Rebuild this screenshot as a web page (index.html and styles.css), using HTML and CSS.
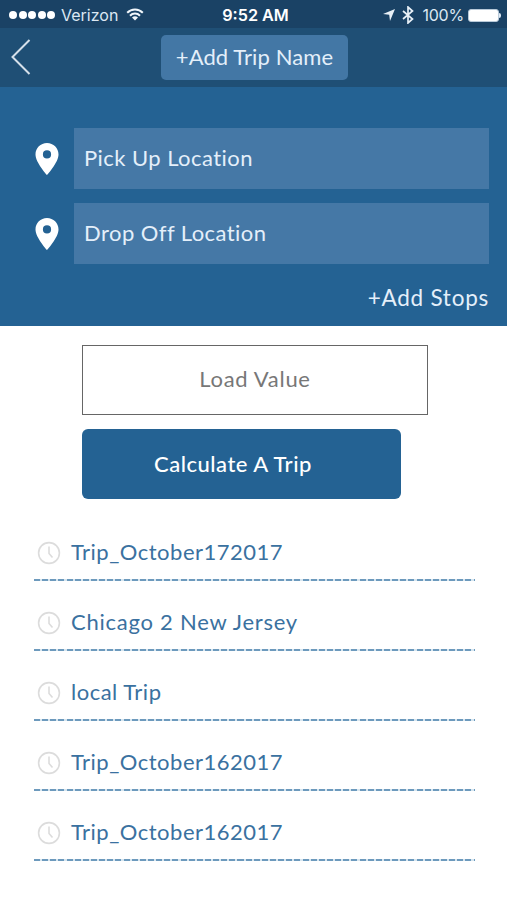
FILE: index.html
```html
<!DOCTYPE html>
<html lang="en">
<head>
    <meta charset="UTF-8">
    <meta name="viewport" content="width=device-width, initial-scale=1.0">
    <title>Trip Calculator</title>
    <link rel="stylesheet" href="styles.css">
</head>
<body>
    <!-- Shared icons -->
    <svg width="0" height="0" class="sprite">
        <symbol id="pin" viewBox="0 0 24 32">
            <path fill-rule="evenodd" d="M12 0C5.600 0 .5 5 .5 11.400C.5 19.500 12 32 12 32S23.500 19.500 23.500 11.400C23.500 5 18.400 0 12 0ZM12 7.300A4.100 4.100 0 1 1 12 15.500A4.100 4.100 0 1 1 12 7.300Z"/>
        </symbol>
        <symbol id="clock" viewBox="0 0 24 24">
            <circle cx="12" cy="12" r="10.400"/>
            <path d="M12 5.500V12.500L15.500 16.500"/>
        </symbol>
    </svg>

    <div class="status-bar">
        <div class="status-left">
            <span class="signal"><i></i><i></i><i></i><i></i><i></i></span>
            <span class="carrier">Verizon</span>
            <svg class="wifi" width="18" height="13" viewBox="0 0 18 13">
                <path d="M1.200 4.800A11 11 0 0 1 16.800 4.800M4 7.700A7 7 0 0 1 14 7.700"/>
                <path class="solid" d="M9 12.600L6 9.600A4.300 4.300 0 0 1 12 9.600Z"/>
            </svg>
        </div>
        <div class="time">9:52 AM</div>
        <div class="status-right">
            <svg class="arrow" width="12" height="12" viewBox="0 0 12 12"><path d="M12 0L7 12L6.200 5.800L0 5Z"/></svg>
            <svg class="bluetooth" width="12" height="18" viewBox="0 0 12 18"><path d="M1 5L10.500 13L6 17V1L10.500 5L1 13"/></svg>
            <span class="percent">100%</span>
            <span class="battery"></span>
        </div>
    </div>

    <div class="nav">
        <svg class="back" width="20" height="36" viewBox="0 0 20 36"><path d="M18.500 1L1.500 18L18.500 35"/></svg>
        <button class="trip-name">+Add Trip Name</button>
    </div>

    <div class="locations">
        <div class="location">
            <svg class="pin" width="24" height="32"><use href="#pin"/></svg>
            <div class="field">Pick Up Location</div>
        </div>
        <div class="location">
            <svg class="pin" width="24" height="32"><use href="#pin"/></svg>
            <div class="field">Drop Off Location</div>
        </div>
        <div class="add-stops">+Add Stops</div>
    </div>

    <div class="form">
        <div class="load-value">Load Value</div>
        <button class="calculate">Calculate A Trip</button>
    </div>

    <ul class="trips">
        <li><svg class="clock" width="24" height="24"><use href="#clock"/></svg>Trip_October172017</li>
        <li><svg class="clock" width="24" height="24"><use href="#clock"/></svg><span class="named">Chicago 2 New Jersey</span></li>
        <li><svg class="clock" width="24" height="24"><use href="#clock"/></svg>local Trip</li>
        <li><svg class="clock" width="24" height="24"><use href="#clock"/></svg>Trip_October162017</li>
        <li><svg class="clock" width="24" height="24"><use href="#clock"/></svg>Trip_October162017</li>
    </ul>
</body>
</html>
```
FILE: styles.css
```css
* {
    box-sizing: border-box;
}
body {
    margin: 0;
    height: 900px;
    overflow: hidden;
    background: #fff;
    font-family: Lato, "Liberation Sans", sans-serif;
    font-size: 22px;
    letter-spacing: 0.5px;
    white-space: nowrap;
}
.sprite {
    display: block;
}
button {
    border: none;
    padding: 0;
    font: inherit;
    letter-spacing: inherit;
}

/* Status bar */
.status-bar {
    display: grid;
    grid-template-columns: 1fr auto 1fr;
    align-items: center;
    height: 28px;
    padding: 2px 5px 0 9px;
    background: #1a4265;
    color: #dce8f3;
    font-family: Inter, sans-serif;
    font-size: 16px;
    letter-spacing: 0;
}
.status-left,
.status-right {
    display: flex;
    align-items: center;
}
.status-right {
    justify-content: flex-end;
}
.signal {
    display: flex;
    gap: 1.500px;
    margin-right: 6px;
}
.signal i {
    width: 8px;
    height: 8px;
    border-radius: 50%;
    background: #fff;
}
.wifi {
    margin-left: 8px;
    margin-bottom: 2px;
    fill: none;
    stroke: #f2f7fb;
    stroke-width: 2;
}
.wifi .solid {
    fill: #f2f7fb;
    stroke: none;
}
.time {
    color: #fff;
    font-size: 16.2px;
    font-weight: 600;
}
.arrow {
    fill: #e8f0f7;
}
.bluetooth {
    margin: 0 8px 0 7px;
    fill: none;
    stroke: #e8f0f7;
    stroke-width: 1.7;
}
.percent {
    letter-spacing: -0.2px;
}
.battery {
    position: relative;
    width: 31px;
    height: 13px;
    margin: 0 3px 0 4px;
    border: 1px solid #b8c9d8;
    border-radius: 3px;
    background: #fff;
}
.battery::after {
    content: "";
    position: absolute;
    left: 30px;
    top: 3px;
    width: 2px;
    height: 5px;
    border-radius: 0 2px 2px 0;
    background: #dce8f3;
}

/* Navigation */
.nav {
    display: grid;
    grid-template-columns: 161px 187px;
    align-items: center;
    height: 59px;
    padding-bottom: 1px;
    background: #1f4f75;
}
.back {
    margin-left: 11px;
    fill: none;
    stroke: #d5e0ea;
    stroke-width: 2;
}
.trip-name {
    height: 45px;
    padding-bottom: 2px;
    border-radius: 5px;
    background: #4377a5;
    color: #e4effa;
    letter-spacing: 0.1px;
}

/* Pick up / drop off */
.locations {
    height: 239px;
    padding: 41px 18px 0 35px;
    background: #246293;
    color: #e4effa;
}
.location {
    display: flex;
    align-items: center;
    gap: 15px;
    margin-bottom: 14px;
}
.pin {
    fill: #fff;
}
.field {
    display: flex;
    align-items: center;
    flex: 1;
    height: 61px;
    padding: 0 0 2px 10px;
    background: #4578a6;
    letter-spacing: 0.45px;
}
.add-stops {
    margin-top: 20px;
    line-height: 28px;
    text-align: right;
    font-size: 22.5px;
    letter-spacing: 0.75px;
}

/* Load value form */
.form {
    padding: 19px 0 0 82px;
}
.load-value {
    width: 346px;
    height: 70px;
    border: 1px solid #666;
    color: #777;
    line-height: 66px;
    text-align: center;
    letter-spacing: 0.7px;
}
.calculate {
    display: block;
    width: 319px;
    height: 70px;
    margin-top: 14px;
    padding: 0 17px 2px 0;
    border-radius: 6px;
    background: #246293;
    color: #fff;
    font-weight: 500;
}

/* Recent trips */
.trips {
    margin: 0;
    padding: 12px 32px 0 34px;
    list-style: none;
    color: #3a71a0;
}
.trips li {
    display: flex;
    align-items: center;
    height: 70px;
    padding: 10px 0 0 3px;
    background: repeating-linear-gradient(to right, #6d9abd 0 6px, #d7e6f0 6px 8.140px) left bottom / 100% 2px no-repeat;
}
.trips .named {
    letter-spacing: 0.75px;
}
.clock {
    margin: 3px 10px 0 0;
    fill: none;
    stroke: #dcdcdc;
    stroke-width: 1.6;
}
```
